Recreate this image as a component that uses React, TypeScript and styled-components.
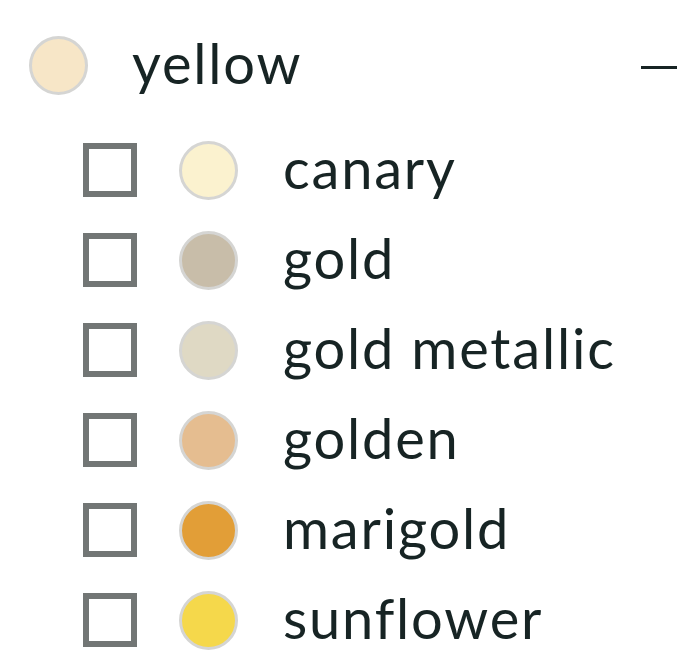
import styled, { createGlobalStyle } from 'styled-components';

const GlobalStyle = createGlobalStyle`
  html, body {
    margin: 0;
    padding: 0;
    background: #ffffff;
  }
  body {
    font-family: Lato, "Noto Sans", sans-serif;
    color: #172424;
  }
`;

const Panel = styled.div`
  width: 694px;
  padding: 20px 17px 0 29px;
  box-sizing: border-box;
`;

const GroupHeader = styled.div`
  display: flex;
  align-items: center;
  height: 90px;
`;

const Swatch = styled.span<{ $color: string }>`
  flex: none;
  width: 59px;
  height: 59px;
  border-radius: 50%;
  box-sizing: border-box;
  border: 3px solid #d5d5d3;
  background: ${(p) => p.$color};
`;

const GroupName = styled.span`
  flex: 1;
  margin-left: 44px;
  font-size: 56px;
  letter-spacing: 1.8px;
  line-height: 1;
  padding-bottom: 4px;
`;

const Collapse = styled.button`
  flex: none;
  width: 36px;
  height: 20px;
  padding: 0;
  border: none;
  background: none;
  cursor: pointer;
  display: flex;
  align-items: center;

  &::before {
    content: '';
    display: block;
    width: 36px;
    height: 3px;
    background: #172424;
    margin-top: 5px;
  }
`;

const Options = styled.ul`
  list-style: none;
  margin: 15px 0 0;
  padding: 0 0 0 54px;
`;

const Option = styled.li`
  display: flex;
  align-items: center;
  height: 90px;
`;

const Box = styled.span`
  flex: none;
  width: 54px;
  height: 54px;
  box-sizing: border-box;
  border: 6px solid #727675;
  margin-right: 42px;
`;

const Label = styled.span`
  margin-left: 45px;
  font-size: 56px;
  letter-spacing: 1.8px;
  line-height: 1;
  padding-bottom: 4px;
  white-space: nowrap;
`;

const shades = [
  { name: 'canary', color: '#fbf2cf' },
  { name: 'gold', color: '#c8bda9' },
  { name: 'gold metallic', color: '#dfd9c4' },
  { name: 'golden', color: '#e5bd90' },
  { name: 'marigold', color: '#e29e37' },
  { name: 'sunflower', color: '#f5d84b' },
];

export default function App() {
  return (
    <>
      <GlobalStyle />
      <Panel>
        <GroupHeader>
          <Swatch $color="#f7e6c7" />
          <GroupName>yellow</GroupName>
          <Collapse aria-label="collapse" />
        </GroupHeader>
        <Options>
          {shades.map((s) => (
            <Option key={s.name}>
              <Box />
              <Swatch $color={s.color} />
              <Label>{s.name}</Label>
            </Option>
          ))}
        </Options>
      </Panel>
    </>
  );
}
